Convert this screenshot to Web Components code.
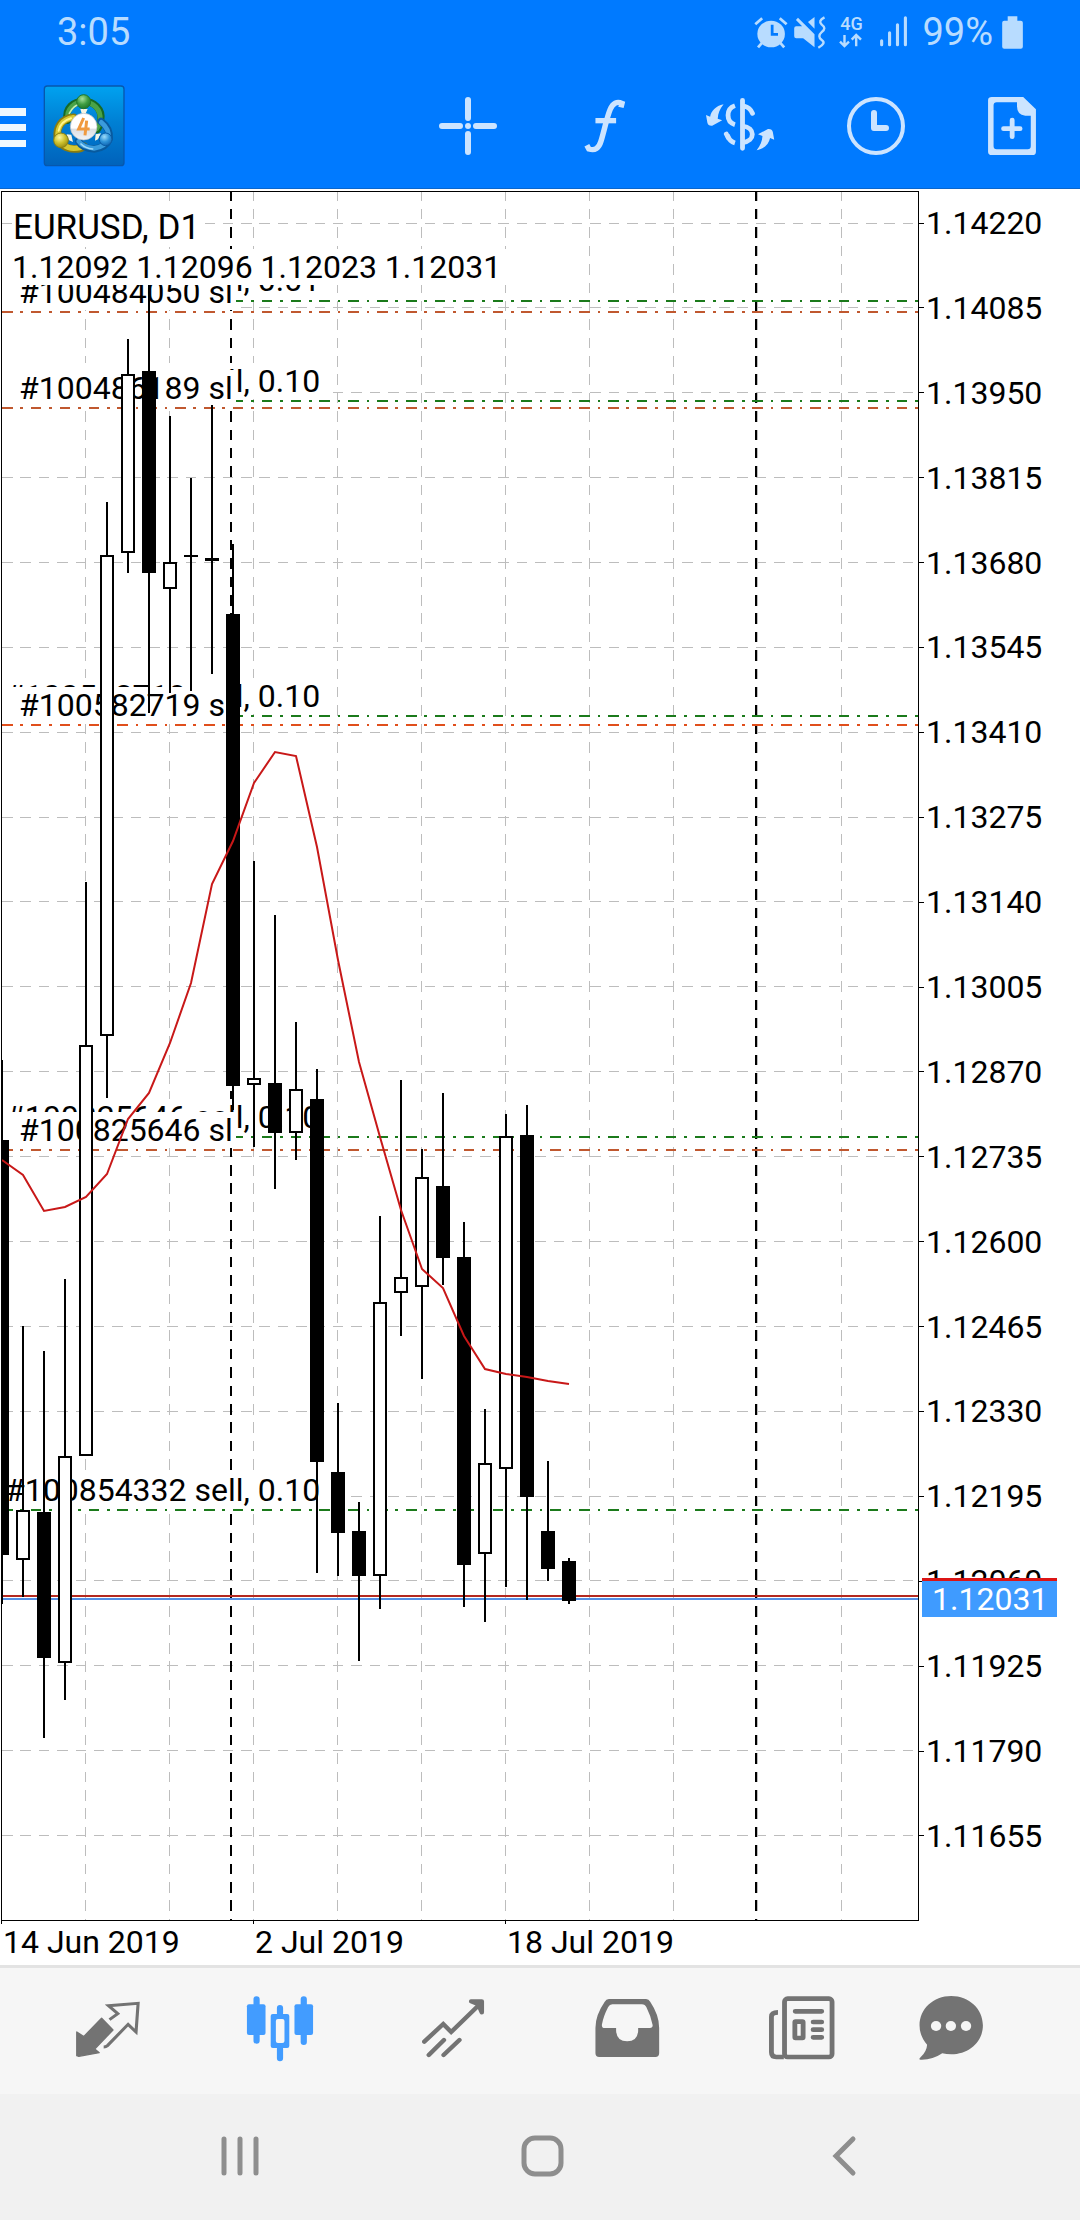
<!DOCTYPE html>
<html lang="en">
<head>
<meta charset="utf-8">
<meta name="viewport" content="width=device-width, initial-scale=1">
<title>EURUSD, D1</title>
<style>
html, body { margin: 0; }
body { background: #fff; color: #000; font-family: Roboto, "Noto Sans", sans-serif; font-size: 32px; }
</style>
</head>
<body>
<trading-app></trading-app>

<script>
const define = (name, html, setup) => {
  const tpl = document.createElement('template');
  tpl.innerHTML = html;
  customElements.define(name, class extends HTMLElement {
    connectedCallback() {
      if (this.shadowRoot) return;
      const root = this.attachShadow({ mode: 'open' });
      root.append(tpl.content.cloneNode(true));
      if (setup) setup(this, root);
    }
  });
};

/* Drawing spaces shared by the icons: each has its own origin and unit. */
const TOP_RIGHT = 'translate(540 0) scale(.3444 .3333)';
const BOTTOM_LEFT = 'translate(0 1860) scale(.3444 .3333)';
const BOTTOM_RIGHT = 'translate(540 1860) scale(.3444 .3333)';

const ICONS = {
  menu: ['0 86 28 80', '<path fill="#eff8ff" d="M0 108h26v8H0zM0 124h26v7H0zM0 140h26v7H0z"/>'],
  logo: ['40 84 88 84', `
    <defs>
      <linearGradient id="bg" x1="0" y1="0" x2="0" y2="1"><stop offset="0" stop-color="#00a2f0"/><stop offset=".45" stop-color="#0080d4"/><stop offset="1" stop-color="#0062bb"/></linearGradient>
      <radialGradient id="g" cx=".4" cy=".3" r=".8"><stop offset="0" stop-color="#a6e09a"/><stop offset=".5" stop-color="#3f9d42"/><stop offset="1" stop-color="#176d24"/></radialGradient>
      <radialGradient id="y" cx=".4" cy=".3" r=".8"><stop offset="0" stop-color="#fbf6a0"/><stop offset=".5" stop-color="#cdc02a"/><stop offset="1" stop-color="#8a7d10"/></radialGradient>
      <radialGradient id="b" cx=".4" cy=".3" r=".8"><stop offset="0" stop-color="#9edcfa"/><stop offset=".5" stop-color="#2c92d8"/><stop offset="1" stop-color="#0c5ba8"/></radialGradient>
      <linearGradient id="w" x1="0" y1="0" x2="0" y2="1"><stop offset=".55" stop-color="#fff"/><stop offset=".6" stop-color="#dcdfe4"/><stop offset="1" stop-color="#f2f3f5"/></linearGradient>
    </defs>
    <g transform="translate(0 76) scale(.3333)">
      <rect x="133" y="30" width="239" height="239" rx="9" fill="url(#bg)" stroke="#0757ad" stroke-width="4"/>
      <g fill="none" stroke-linecap="round">
        <path d="M202 133C194 96 222 76 251 76S309 98 302 134Q300 150 291 161" stroke="#176a24" stroke-width="22"/>
        <path d="M204 130C198 98 224 78 251 78S305 100 300 134Q298 148 290 158" stroke="#4aa348" stroke-width="15"/>
        <path d="M208 112Q220 88 244 82" stroke="#c3edb5" stroke-width="5"/>
        <path d="M220 124C182 128 170 156 172 182Q184 218 224 219Q244 219 253 211" stroke="#8a7c0e" stroke-width="23"/>
        <path d="M220 125C184 130 172 156 174 182Q186 216 222 217Q242 217 251 211" stroke="#d6c832" stroke-width="16"/>
        <path d="M213 127Q182 136 176 164" stroke="#fff68c" stroke-width="6"/>
        <path d="M236 196Q247 217 283 219Q318 215 328 188Q330 156 303 136" stroke="#085a9e" stroke-width="22"/>
        <path d="M236 196Q248 214 282 217Q316 213 326 188Q328 158 304 139" stroke="#3a9bdc" stroke-width="14"/>
        <path d="M243 204Q256 217 278 219" stroke="#a3dcfa" stroke-width="5"/>
      </g>
      <path fill="#f5f5e5" d="M200 175l14 1 5 22-13-6zM287 175l16-3-9 18-9 4zM241 99h22l-7 16h-10z"/>
      <circle cx="251" cy="77" r="21" fill="url(#g)" stroke="#1f7629" stroke-width="3"/>
      <circle cx="183" cy="193" r="22" fill="url(#y)" stroke="#8b7f12" stroke-width="3"/>
      <circle cx="317" cy="190" r="19" fill="url(#b)" stroke="#0a5aa5" stroke-width="3"/>
      <circle cx="251" cy="152" r="40" fill="url(#w)" stroke="#b8bcc2" stroke-width="2"/>
      <path fill="none" stroke="#f09a40" stroke-width="9" d="M251 126L236 159H269M260 134L255 178"/>
    </g>`],
  alarm: ['755 12 34 36', `<g transform="${TOP_RIGHT}">
      <circle cx="674" cy="96" r="40" fill="currentColor"/>
      <path fill="none" stroke="#007aff" stroke-width="8" d="M677 68v29h17"/>
      <path fill="none" stroke="currentColor" stroke-width="8" d="M628 67l20-18M719 67l-20-18M636 136l14-16M712 136l-14-16"/>
    </g>`],
  mute: ['793 12 36 36', `<g transform="${TOP_RIGHT}" fill="currentColor">
      <path d="M741 79q0-6 6-6h17L746 54l6-7 48 50v39L767 109h-20q-6 0-6-6zM781 60l19-15v35z"/>
      <path fill="none" stroke="currentColor" stroke-width="7" d="M829 46q-20 10-8 22 15 11 0 22-14 13 0 24 14 10-10 23"/>
    </g>`],
  data: ['839 32 26 16', `<g transform="${TOP_RIGHT}" fill="none" stroke="currentColor" stroke-width="7">
      <path d="M887 102v32M874 122l13 13 13-13M921 136v-34M908 116l13-14 14 14"/></g>`],
  signal: ['878 14 32 34', `<g transform="${TOP_RIGHT}" stroke="currentColor" stroke-width="9" stroke-linecap="round">
      <path d="M992 119v12M1015 95v36M1038 71v60M1061 50v81"/></g>`],
  battery: ['1000 12 26 36', `<g transform="${TOP_RIGHT}" fill="currentColor"><path d="M1358 43h28v13h10q6 0 6 6v72q0 6-6 6h-48q-6 0-6-6V62q0-6 6-6h10z"/></g>`],
  crosshair: ['428 86 80 80', '<g stroke="currentColor" stroke-width="6" stroke-linecap="round"><path d="M468 100v18M468 134v18M442 126h18M476 126h18"/></g><circle cx="468" cy="126" r="3" fill="currentColor"/>'],
  indicators: ['564 86 80 80', `<g transform="${TOP_RIGHT}" fill="none" stroke="currentColor">
      <path stroke-width="16" d="M235 322L238 310Q216 300 204 328C194 352 188 386 177 424Q168 456 142 447L136 436"/>
      <path stroke-width="16" d="M161 362h60"/></g>`],
  trade: ['700 86 80 80', `<g transform="${TOP_RIGHT}" fill="none" stroke="currentColor" stroke-width="14">
      <path stroke="none" fill="currentColor" d="M533 313C510 318 497 333 494 350L482 345L486 368Q488 378 500 377L529 361L516 356C517 340 522 328 533 313ZM629 451C652 446 665 431 668 414L680 419L676 396Q674 386 662 387L633 403L646 408C645 424 640 436 629 451Z"/>
      <path d="M566 317Q546 324 546 346T566 374M566 429Q550 424 544 405M588 378C626 382 626 424 588 428"/>
      <path stroke-linecap="round" d="M541 402q3 6 6 12M588 301v144M592 318Q610 322 617 340"/></g>`],
  clock: ['836 86 80 80', '<circle cx="876" cy="126" r="27" fill="none" stroke="currentColor" stroke-width="4"/><path fill="none" stroke="currentColor" stroke-width="6" stroke-linecap="round" stroke-linejoin="round" d="M874 113v15h12"/>'],
  order: ['972 86 80 80', `<g transform="${TOP_RIGHT}" fill="currentColor">
      <path fill-rule="evenodd" d="M1312 291h91l37 37v127q0 10-10 10h-118q-11 0-11-10V301q0-10 11-10zM1326 307q-9 0-9 9v122q0 10 9 10h90q9 0 9-10V347h-16q-24-2-24-28v-12z"/>
      <path stroke="currentColor" stroke-width="14" stroke-linecap="round" d="M1371 360v50M1346 386h48"/></g>`],
  quotes: ['68 1991 80 80', `<g transform="${BOTTOM_LEFT}" fill="currentColor">
      <path stroke="currentColor" stroke-width="4" stroke-linejoin="round" d="M223 516L243 530 295 475 328 510 275 567 288 578 229 589 223 587Z"/>
      <path fill="none" stroke="currentColor" stroke-width="9" d="M318 479L342 461 315 437 401 430 395 516 372 493 312 557Q308 561 301 561"/></g>`],
  charts: ['241 1991 80 80', `<g transform="${BOTTOM_LEFT}" fill="currentColor">
      <rect x="717" y="433" width="54" height="92" rx="6"/><rect x="855" y="433" width="54" height="92" rx="6"/>
      <path fill-rule="evenodd" d="M792 462h42q6 0 6 6v90q0 6-6 6h-42q-6 0-6-6v-90q0-6 6-6zM807 477q-6 0-6 6v60q0 6 6 6h13q6 0 6-6v-60q0-6-6-6z"/>
      <path stroke="currentColor" stroke-width="18" stroke-linecap="round" d="M745 418v14M745 526v16M882 418v14M882 526v20M813 444v16M813 566v29"/></g>`],
  trend: ['414 1991 80 80', `<g transform="${BOTTOM_LEFT}" fill="none" stroke="currentColor" stroke-width="13" stroke-linecap="round">
      <path d="M1232 545L1287 492 1310 516 1396 430M1245 585l44-45M1288 585l46-45"/><path fill="currentColor" stroke-linejoin="round" d="M1368 424h31v33l-10-24z"/></g>`],
  history: ['587 1991 80 80', `<g transform="${BOTTOM_RIGHT}" fill="currentColor">
      <path fill-rule="evenodd" d="M200 417h108q8 0 12 8 26 40 26 78v77q0 11-11 11H172q-11 0-11-11v-77q0-38 27-78 4-8 12-8zM210 433q-8 0-12 8-14 28-18 52-2 11 8 11h33v9q2 31 32 31 30 0 32-31v-9h34q9 0 8-9-6-29-18-53-4-9-13-9z"/></g>`],
  news: ['760 1991 80 80', `<g transform="${BOTTOM_RIGHT}" fill="none" stroke="currentColor" stroke-width="14">
      <rect x="710" y="416" width="138" height="175" rx="9"/><path d="M708 591h-22q-14 0-14-14V470q0-13 19-13"/>
      <path stroke-linecap="round" d="M741 454h77M793 486h25M793 509h25M793 532h25"/><rect x="740" y="485" width="24" height="49" rx="2"/></g>`],
  chat: ['911 1991 80 80', `<g transform="${BOTTOM_RIGHT}" fill="currentColor">
      <path d="M1194 408c52 0 92 39 92 88s-40 87-92 87q-14 0-26-3-28 20-63 19-7-1 0-7 18-18 19-38-22-26-22-58c0-49 40-88 92-88z"/>
      <g fill="#f6f6f6"><circle cx="1150" cy="498" r="15"/><circle cx="1193" cy="498" r="15"/><circle cx="1237" cy="498" r="15"/></g></g>`],
  recents: ['200 2117 80 80', '<path stroke="currentColor" stroke-width="5" stroke-linecap="round" d="M224 2139v34M240 2139v34M256 2139v34"/>'],
  home: ['502 2117 80 80', '<rect x="524" y="2138" width="37" height="36" rx="11" fill="none" stroke="currentColor" stroke-width="5"/>'],
  back: ['804 2117 80 80', '<path fill="none" stroke="currentColor" stroke-width="5" stroke-linecap="round" d="M853 2139l-17 17 17 17"/>']
};

define('app-icon', `<style>:host{display:block;flex:none}svg{display:block}</style>`, (host, root) => {
  const [box, body] = ICONS[host.getAttribute('name')];
  const [, , w, h] = box.split(' ');
  root.innerHTML += `<svg viewBox="${box}" width="${w}" height="${h}" aria-hidden="true">${body}</svg>`;
});

define('status-bar', `<style>
  :host{display:flex;box-sizing:border-box;height:64px;padding:0 54px 0 57px;align-items:center;justify-content:space-between;color:#b8dcff;font-size:38px;line-height:40px}
  .right{display:flex;align-items:center;gap:4px;height:60px}
  .net{display:flex;flex-direction:column;align-items:center;margin:0 10px 0 6px;font-size:18px;line-height:18px;font-weight:500}
  .pct{margin:0 3px 0 8px}
</style>
<time>3:05</time>
<div class="right">
  <app-icon name="alarm"></app-icon><app-icon name="mute"></app-icon>
  <div class="net"><span>4G</span><app-icon name="data"></app-icon></div>
  <app-icon name="signal"></app-icon><span class="pct">99%</span><app-icon name="battery"></app-icon>
</div>`);

define('tool-bar', `<style>
  :host{display:flex;box-sizing:border-box;height:125px;border-bottom:1px solid #0a66cc;align-items:center;color:#cce4ff}
  button{all:unset;display:flex;align-items:center;justify-content:center;cursor:pointer}
  .logo{margin-left:12px}
  nav{display:flex;margin-left:auto}
  nav button{width:136px;height:124px}
</style>
<button aria-label="Menu"><app-icon name="menu"></app-icon></button>
<app-icon class="logo" name="logo"></app-icon>
<nav>
  <button aria-label="Crosshair"><app-icon name="crosshair"></app-icon></button>
  <button aria-label="Indicators"><app-icon name="indicators"></app-icon></button>
  <button aria-label="Trade"><app-icon name="trade"></app-icon></button>
  <button aria-label="Timeframe"><app-icon name="clock"></app-icon></button>
  <button aria-label="New order"><app-icon name="order"></app-icon></button>
</nav>`);

/* [x, high, low, body top, body bottom, filled] */
const CANDLES = [
  [2,1060,1604,1140,1555,1],[23,1326,1597,1510,1560,0],[44,1351,1738,1512,1658,1],[65,1279,1700,1456,1663,0],
  [86,882,1456,1045,1456,0],[107,502,1098,555,1036,0],[128,339,573,374,553,0],[149,283,713,371,573,1],
  [170,416,693,562,589,0],[191,478,691,555,557,1],[212,405,674,558,561,1],[233,544,1110,614,1086,1],
  [254,861,1147,1078,1085,0],[275,915,1189,1083,1133,1],[296,1022,1160,1089,1133,0],[317,1069,1573,1099,1462,1],
  [338,1403,1576,1472,1533,1],[359,1502,1661,1531,1576,1],[380,1216,1609,1302,1576,0],[401,1080,1336,1277,1293,0],
  [422,1149,1379,1177,1287,0],[443,1093,1285,1186,1258,1],[464,1222,1607,1257,1565,1],[485,1409,1622,1463,1554,0],
  [506,1114,1587,1136,1469,0],[527,1105,1600,1135,1497,1],[548,1461,1581,1531,1569,1],[569,1558,1604,1561,1601,1]
];
const AVERAGE = '2,1160 23,1175 44,1211 65,1207 86,1197 107,1174 128,1119 149,1093 170,1043 191,983 212,884 233,841 254,783 275,752 296,756 317,847 338,960 359,1062 380,1137 401,1210 422,1269 443,1288 464,1336 485,1369 506,1374 527,1377 548,1381 569,1384';
const ORDERS = [
  { id: '#100484050', lot: '0.01', base: 291, line: 301, slBase: 303, slLine: 312, sl: '#c0582f' },
  { id: '#100486189', lot: '0.10', base: 392, line: 401, slBase: 399, slLine: 408, sl: '#c0582f' },
  { id: '#100582719', lot: '0.10', base: 707, line: 716, slBase: 716, slLine: 725, sl: '#e04f1c' },
  { id: '#100825646', lot: '0.10', base: 1128, line: 1137, slBase: 1141, slLine: 1150, sl: '#c0582f' },
  { id: '#100854332', lot: '0.10', base: 1501, line: 1510 }
];

define('price-plot', `<style>
  :host{display:block}
  svg{display:block;width:100%;height:auto}
  text{font-size:32px;fill:#000}
  text.title{font-size:35px}
  .crisp{shape-rendering:crispEdges}
</style>`, (host, root) => {
  let s = '<g class="crisp" fill="none"><g stroke="#bdbdbd" stroke-dasharray="10.5 7.885">';
  for (let i = 0; i < 20; i++) s += `<path d="M2 ${Math.floor(223 + i * 84.87) + .5}H918"/>`;
  for (let x = 85.5; x < 918; x += 84) s += `<path d="M${x} 190.6V1920"/>`;
  s += '</g><g stroke="#000" stroke-width="2" stroke-dasharray="10.5 7.885"><path d="M231 190.6V1920M756 190.6V1920"/></g></g>';
  const level = (y, color) => `<path class="crisp" stroke="${color}" stroke-width="2" stroke-dasharray="10.5 7.8 2.7 7.86" d="M2 ${y}H919"/>`;
  for (const o of ORDERS) {
    s += level(o.line, '#1b7a1b');
    s += `<rect x="2" y="${o.base - 29}" width="323" height="36" fill="#fff"/><text x="5" y="${o.base}">${o.id} sell, ${o.lot}</text>`;
    if (o.slBase) {
      s += `<rect x="2" y="${o.slBase - 29}" width="234" height="36" fill="#fff"/><text x="19" y="${o.slBase}">${o.id} sl</text>`;
      s += level(o.slLine, o.sl);
    }
  }
  s += '<g class="crisp"><path stroke="#b4281e" stroke-width="2" d="M1 1596H919"/><path stroke="#5590e4" stroke-width="2" d="M1 1599H919"/>';
  for (const [x, hi, lo, top, bot, full] of CANDLES) {
    const l = Math.max(x - 7, 1), w = x + 7 - l;
    s += `<path stroke="#000" stroke-width="2" d="M${x} ${hi}V${lo}"/>`;
    s += full ? `<rect x="${l}" y="${top}" width="${w}" height="${bot - top}"/>`
      : `<rect x="${l + 1}" y="${top + 1}" width="${w - 2}" height="${bot - top - 2}" fill="#fff" stroke="#000" stroke-width="2"/>`;
  }
  s += `</g><polyline points="${AVERAGE}" fill="none" stroke="#c81818" stroke-width="2"/>`;
  s += '<rect x="12" y="205" width="193" height="42" fill="#fff"/><text class="title" x="13" y="239">EURUSD, D1</text>';
  s += '<rect x="10" y="249" width="500" height="36" fill="#fff"/><text x="12" y="278">1.12092 1.12096 1.12023 1.12031</text>';
  s += '<path class="crisp" fill="none" stroke="#000" d="M1.5 191.5H918.5V1920.5H1.5Z"/>';
  root.innerHTML += `<svg viewBox="0 189 919 1732" role="img" aria-label="EURUSD daily candlestick chart">${s}</svg>`;
});

define('price-axis', `<style>
  :host{display:block;position:relative}
  ol{list-style:none;margin:0;padding:15px 0 66px;box-sizing:border-box;height:100%;display:flex;flex-direction:column;justify-content:space-between;line-height:38px}
  li{display:flex;align-items:center;gap:2px}
  li::before{content:"";width:5px;height:1px;background:#000}
  output{position:absolute;left:3px;top:1389px;box-sizing:border-box;width:135px;height:39px;padding-left:10px;border-top:3px solid #dc1414;background:#3f9bff;color:#fff;line-height:36px}
</style>
<ol></ol><output>1.12031</output>`, (host, root) => {
  root.querySelector('ol').innerHTML = Array.from({ length: 20 }, (_, i) => `<li>${((114220 - i * 135) / 1e5).toFixed(5)}</li>`).join('');
});

define('date-axis', `<style>
  ol{list-style:none;margin:0;padding:0 0 2px 1px;display:grid;grid-template-columns:252fr 252fr 575fr;line-height:42px}
  :host{display:block}
  li{position:relative;padding-left:2px}
  li::before{content:"";position:absolute;left:0;top:0;width:1px;height:3px;background:#000}
</style>
<ol><li>14 Jun 2019</li><li>2 Jul 2019</li><li>18 Jul 2019</li></ol>`);

define('chart-view', `<style>
  :host{display:block;background:#fff}
  .plot{display:grid;grid-template-columns:minmax(0,1fr) 161px}
</style>
<div class="plot"><price-plot></price-plot><price-axis></price-axis></div><date-axis></date-axis>`);

define('tab-bar', `<style>
  nav{display:grid;grid-template-columns:repeat(5,173fr) 130fr;padding:0 64px 0 21px;height:126px;border-top:3px solid #e3e3e3;background:#f6f6f6;color:#737373}
  :host{display:block}
  a{display:flex;align-items:center;justify-content:center;color:inherit}
  a[aria-current]{color:#429cff}
</style>
<nav>
  <a href="#quotes" aria-label="Quotes"><app-icon name="quotes"></app-icon></a>
  <a href="#charts" aria-label="Charts" aria-current="page"><app-icon name="charts"></app-icon></a>
  <a href="#trade" aria-label="Trade"><app-icon name="trend"></app-icon></a>
  <a href="#history" aria-label="History"><app-icon name="history"></app-icon></a>
  <a href="#news" aria-label="News"><app-icon name="news"></app-icon></a>
  <a href="#chat" aria-label="Chat"><app-icon name="chat"></app-icon></a>
</nav>`);

define('system-nav', `<style>
  :host{display:grid;grid-template-columns:repeat(3,1fr);padding:0 85px 0 89px;height:126px;background:#f1f1f1;color:#8e8e8e}
  button{all:unset;display:flex;align-items:center;justify-content:center;cursor:pointer}
</style>
<button aria-label="Recent apps"><app-icon name="recents"></app-icon></button>
<button aria-label="Home"><app-icon name="home"></app-icon></button>
<button aria-label="Back"><app-icon name="back"></app-icon></button>`);

define('trading-app', `<style>
  :host{display:flex;flex-direction:column;min-height:100vh}
  header{background:#007aff}
  main{flex:1}
</style>
<header><status-bar></status-bar><tool-bar></tool-bar></header>
<main><chart-view></chart-view></main>
<tab-bar></tab-bar>
<system-nav></system-nav>`);
</script>
</body>
</html>
